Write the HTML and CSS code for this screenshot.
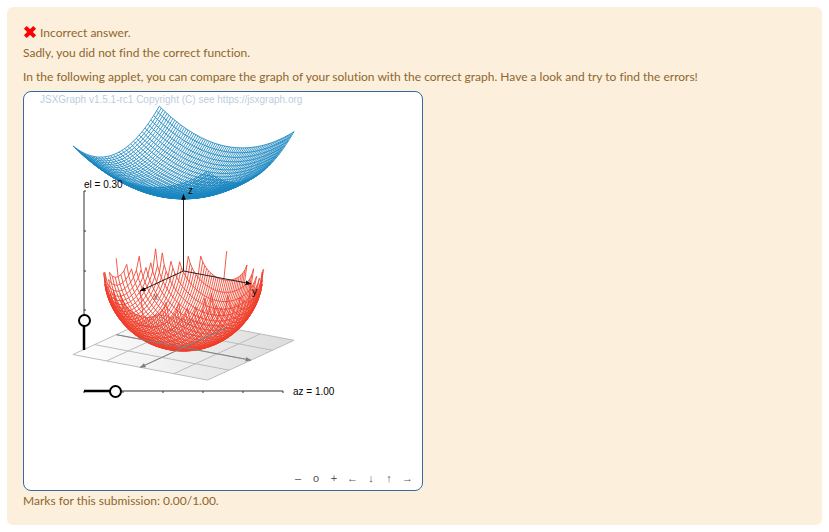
FILE: index.html
```html
<!DOCTYPE html>
<html lang="en">
<head>
<meta charset="utf-8">
<title>Answer feedback</title>
<link rel="stylesheet" href="styles.css">
</head>
<body>
<main class="feedback">
  <p class="verdict"><svg class="cross" viewBox="0 0 12 12" aria-hidden="true"><path d="M2 2 10 10M10 2 2 10"/></svg> Incorrect answer.</p>
  <p class="message">Sadly, you did not find the correct function.</p>
  <p class="intro">In the following applet, you can compare the graph of your solution with the correct graph. Have a look and try to find the errors!</p>
  <section class="board" aria-label="Graph comparison">
    <svg class="plot" viewBox="0 0 398 398">
      <defs>
        <linearGradient id="floor" x1="0" x2="1"><stop offset="0" stop-color="#fff"/><stop offset="1" stop-color="#dcdcdc"/></linearGradient>
        <marker id="tip" viewBox="0 0 8 6" refX="7" refY="3" markerWidth="6" markerHeight="6" markerUnits="userSpaceOnUse" orient="auto"><path d="M0 0 8 3 0 6z" fill="#000"/></marker>
        <marker id="gtip" viewBox="0 0 8 6" refX="7" refY="3" markerWidth="6" markerHeight="6" markerUnits="userSpaceOnUse" orient="auto"><path d="M0 0 8 3 0 6z" fill="#808080"/></marker>
      </defs>
      <text class="credit" x="16" y="11">JSXGraph v1.5.1-rc1 Copyright (C) see https://jsxgraph.org</text>
      <path id="plane" fill="url(#floor)" stroke="#bbb"/>
      <path id="grid" class="grid"/>
      <path id="blue" class="mesh blue"/>
      <text class="label muted" x="129" y="208">x</text>
      <path id="red" class="mesh red"/>
      <path id="floorX" class="floor-axis" marker-end="url(#gtip)"/>
      <path id="floorY" class="floor-axis" marker-end="url(#gtip)"/>
      <path id="axisX" class="axis" marker-end="url(#tip)"/>
      <path id="axisY" class="axis" marker-end="url(#tip)"/>
      <path id="axisZ" class="axis" marker-end="url(#tip)"/>
      <text class="label" x="228" y="203">y</text>
      <text class="label" x="164" y="102">z</text>
      <path class="track" d="M60 99V258M60 99h2M60 139h2M60 179h2M60 218h2"/>
      <path id="elLevel" class="level"/>
      <path class="track" d="M60 299H259M60 299v2M99 299v2M139 299v2M179 299v2M219 299v2M259 299v2"/>
      <path id="azLevel" class="level"/>
      <text id="elText" class="label" x="60" y="96">el = 0.30</text>
      <text id="azText" class="label" x="269" y="303">az = 1.00</text>
    </svg>
    <input class="slider elevation" id="el" type="range" min="0" max="1.57" step="0.01" value="0.3" aria-labelledby="elText">
    <input class="slider azimuth" id="az" type="range" min="0" max="6.28" step="0.01" value="1" aria-labelledby="azText">
    <nav class="controls" aria-label="Zoom and move">
      <button type="button">–</button><button type="button">o</button><button type="button">+</button><button type="button">←</button><button type="button">↓</button><button type="button">↑</button><button type="button">→</button>
    </nav>
  </section>
  <p class="marks">Marks for this submission: 0.00/1.00.</p>
</main>
<script src="plot.js"></script>
</body>
</html>
```
FILE: styles.css
```css
body {
  margin: 7px;
  background: #fff;
  color: #8e662e;
  font: 12px/20px Lato, "Noto Sans", sans-serif;
  font-variant-ligatures: none;
}
.feedback {
  padding: 16px 16px 14px;
  border-radius: 6px;
  background: #fcefdc;
}
p { margin: 0; }
.message { margin-bottom: 4px; }
.intro { margin-bottom: 4px; }
.cross {
  width: 14px;
  height: 14px;
  vertical-align: -2px;
  fill: none;
  stroke: #f00;
  stroke-width: 3.5;
}
.board {
  position: relative;
  width: 400px;
  max-width: 100%;
  box-sizing: border-box;
  border: 1px solid #356aa0;
  border-radius: 8px;
  background: #fff;
  overflow: hidden;
}
.plot {
  display: block;
  width: 100%;
  font-family: "Liberation Sans", Arial, sans-serif;
}
.credit { font-size: 10px; fill: #356aa0; opacity: .35; }
.label { font-size: 10px; fill: #000; }
.muted { fill: #666; }
.grid { fill: none; stroke: #bbb; }
.mesh { fill: none; stroke-width: .85; stroke-linejoin: round; }
.blue { stroke: #1a86c0; }
.red { stroke: #f03f2a; }
.axis { fill: none; stroke: #222; }
.floor-axis { fill: none; stroke: #808080; }
.track { fill: none; stroke: #333; }
.level { fill: none; stroke: #000; stroke-width: 2.5; }
.slider {
  position: absolute;
  height: 14px;
  margin: 0;
  appearance: none;
  background: none;
}
.slider::-webkit-slider-thumb {
  appearance: none;
  box-sizing: border-box;
  width: 13px;
  height: 13px;
  border: 2px solid #000;
  border-radius: 50%;
  background: #fff;
}
.azimuth { left: 53px; top: 292px; width: 212px; }
.elevation { left: -26px; top: 172px; width: 172px; transform: rotate(-90deg); }
.controls {
  position: absolute;
  right: 5px;
  bottom: 2px;
  display: flex;
}
.controls button {
  min-width: 18px;
  padding: 0 4px;
  border: 0;
  background: none;
  color: #555;
  font: 11px/20px "Liberation Sans", Arial, sans-serif;
}
```
FILE: plot.js
```js
const scale = 80, cx = 159.5, cy = 179;
const stepsX = 30, stepsY = 70;
const byId = id => document.getElementById(id);
let az = 1, el = 0.3;

function project(x, y, z) {
  const side = -Math.cos(az) * x + Math.sin(az) * y;
  const front = Math.sin(az) * x + Math.cos(az) * y;
  const px = cx + scale * side;
  const py = cy + scale * (Math.sin(el) * front - Math.cos(el) * z);
  return px.toFixed(2) + " " + py.toFixed(2);
}

function line(points) {
  return "M" + points.map(p => project(...p)).join("L");
}

function mesh(f) {
  let d = "", pen;
  const add = (i, j) => {
    const x = 2 * i / stepsX - 1, y = 2 * j / stepsY - 1;
    const z = f(x, y);
    if (Number.isNaN(z)) { pen = "M"; return; }
    d += pen + project(x, y, z);
    pen = "L";
  };
  for (let i = 0; i <= stepsX; i++) {
    pen = "M";
    for (let j = 0; j <= stepsY; j++) add(i, j);
  }
  for (let j = 0; j <= stepsY; j++) {
    pen = "M";
    for (let i = 0; i <= stepsX; i++) add(i, j);
  }
  return d;
}

function bowl(x, y) {
  return 1.01 + 0.36 * (x * x + y * y);
}

// Lower half of the unit sphere, undefined outside the disc.
function hemisphere(x, y) {
  const rest = 1 - x * x - y * y;
  const onRim = Math.abs(rest) < 1e-9;
  if (onRim) {
    const ax = Math.abs(x), ay = Math.abs(y);
    return ax > ay && ay > 1e-9 ? NaN : 0;
  }
  return -Math.sqrt(rest);
}

function draw(id, d) { byId(id).setAttribute("d", d); }

function render() {
  az = Number(byId("az").value);
  el = Number(byId("el").value);
  byId("azText").textContent = "az = " + az.toFixed(2);
  byId("elText").textContent = "el = " + el.toFixed(2);
  draw("azLevel", "M60 299H" + Math.round(60 + 199 * az / 6.28));
  draw("elLevel", "M60 258V" + Math.round(258 - 159 * el / 1.57));
  draw("plane", line([[-1, -1, -1], [1, -1, -1], [1, 1, -1], [-1, 1, -1]]) + "Z");
  draw("grid", [-0.5, 0, 0.5].map(t =>
    line([[t, -1, -1], [t, 1, -1]]) + line([[-1, t, -1], [1, t, -1]])).join(""));
  draw("blue", mesh(bowl));
  draw("red", mesh(hemisphere));
  draw("floorX", line([[-1, 0, -1], [1, 0, -1]]));
  draw("floorY", line([[0, -1, -1], [0, 1, -1]]));
  draw("axisX", line([[0, 0, 0], [1, 0, 0]]));
  draw("axisY", line([[0, 0, 0], [0, 1, 0]]));
  draw("axisZ", line([[0, 0, 0], [0, 0, 1]]));
}

byId("az").addEventListener("input", render);
byId("el").addEventListener("input", render);
render();
```
